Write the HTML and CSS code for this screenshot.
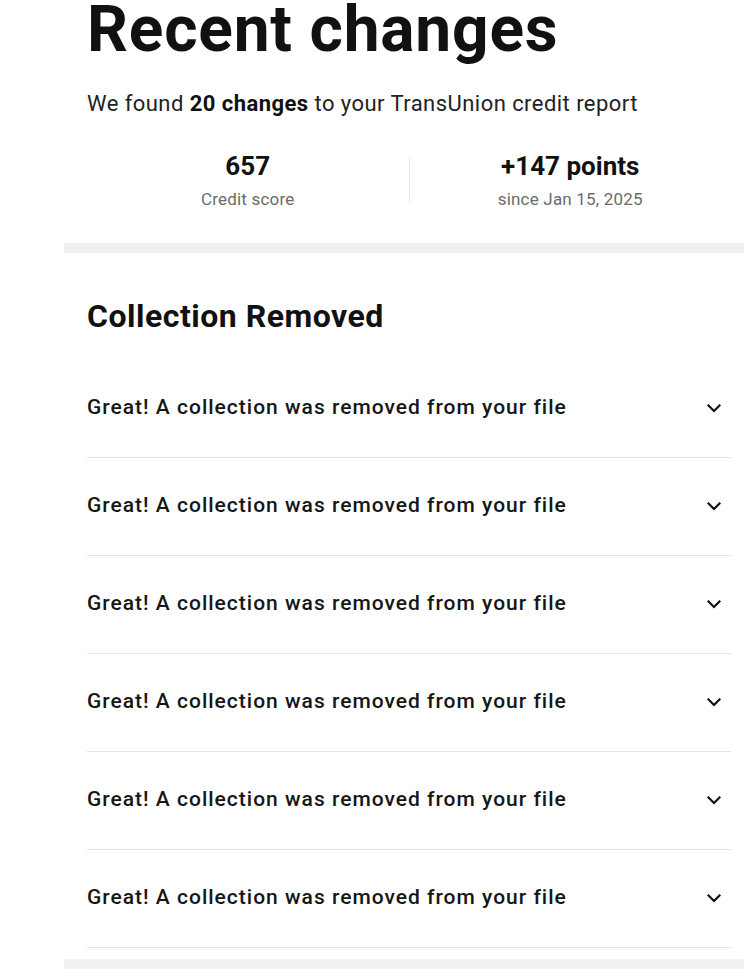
FILE: index.html
```html
<!DOCTYPE html>
<html>
<head>
  <meta charset="UTF-8">
  <link rel="stylesheet" href="styles.css">
</head>
<body>
  <div class="page">
    <div class="intro">
      <h1 class="title">Recent changes</h1>
      <p class="summary">We found <strong>20 changes</strong> to your TransUnion credit report</p>

      <div class="stats">
        <div class="stat">
          <div class="stat-value">657</div>
          <div class="stat-label">Credit score</div>
        </div>
        <div class="stat-divider"></div>
        <div class="stat">
          <div class="stat-value">+147 points</div>
          <div class="stat-label">since Jan 15, 2025</div>
        </div>
      </div>
    </div>

    <div class="band"></div>

    <div class="section">
      <h2 class="section-title">Collection Removed</h2>

      <div class="change-list">
        <div class="change-row">
          <span class="change-text">Great! A collection was removed from your file</span>
          <svg class="chevron" width="14" height="9" viewBox="0 0 14 9"><path d="M1.5 1.5 L7 7 L12.5 1.5" fill="none" stroke="#111" stroke-width="2.2" stroke-linecap="square"/></svg>
        </div>
        <div class="change-row">
          <span class="change-text">Great! A collection was removed from your file</span>
          <svg class="chevron" width="14" height="9" viewBox="0 0 14 9"><path d="M1.5 1.5 L7 7 L12.5 1.5" fill="none" stroke="#111" stroke-width="2.2" stroke-linecap="square"/></svg>
        </div>
        <div class="change-row">
          <span class="change-text">Great! A collection was removed from your file</span>
          <svg class="chevron" width="14" height="9" viewBox="0 0 14 9"><path d="M1.5 1.5 L7 7 L12.5 1.5" fill="none" stroke="#111" stroke-width="2.2" stroke-linecap="square"/></svg>
        </div>
        <div class="change-row">
          <span class="change-text">Great! A collection was removed from your file</span>
          <svg class="chevron" width="14" height="9" viewBox="0 0 14 9"><path d="M1.5 1.5 L7 7 L12.5 1.5" fill="none" stroke="#111" stroke-width="2.2" stroke-linecap="square"/></svg>
        </div>
        <div class="change-row">
          <span class="change-text">Great! A collection was removed from your file</span>
          <svg class="chevron" width="14" height="9" viewBox="0 0 14 9"><path d="M1.5 1.5 L7 7 L12.5 1.5" fill="none" stroke="#111" stroke-width="2.2" stroke-linecap="square"/></svg>
        </div>
        <div class="change-row">
          <span class="change-text">Great! A collection was removed from your file</span>
          <svg class="chevron" width="14" height="9" viewBox="0 0 14 9"><path d="M1.5 1.5 L7 7 L12.5 1.5" fill="none" stroke="#111" stroke-width="2.2" stroke-linecap="square"/></svg>
        </div>
      </div>
    </div>

    <div class="band band-bottom"></div>
  </div>
</body>
</html>
```

FILE: styles.css
```css
* {
  margin: 0;
  padding: 0;
  box-sizing: border-box;
}

body {
  font-family: Roboto, 'Liberation Sans', sans-serif;
  color: #111111;
  background: #ffffff;
}

.page {
  margin-left: 64px;
}

.intro {
  padding: 0 13px 0 23px;
}

.title {
  font-size: 64px;
  line-height: 60px;
  font-weight: 700;
  letter-spacing: 0.8px;
}

.summary {
  margin-top: 30px;
  font-size: 22px;
  line-height: 28px;
  letter-spacing: 0.45px;
  color: #222222;
}

.summary strong {
  font-weight: 700;
  color: #111111;
}

/* Score + change summary */
.stats {
  display: grid;
  grid-template-columns: 1fr 1px 1fr;
  margin-top: 32px;
  margin-bottom: 33px;
}

.stat {
  text-align: center;
}

.stat-value {
  font-size: 26px;
  line-height: 32px;
  font-weight: 700;
}

.stat-label {
  margin-top: 6px;
  font-size: 17px;
  line-height: 22px;
  letter-spacing: 0.2px;
  color: #6b6b6b;
}

.stat-divider {
  align-self: center;
  height: 44px;
  background: #e6e6e6;
}

.band {
  height: 10px;
  background: #eef0f2;
}

.band-bottom {
  margin-top: 11px;
}

.section {
  padding: 0 13px 0 23px;
}

.section-title {
  margin-top: 45px;
  font-size: 32px;
  line-height: 36px;
  font-weight: 700;
  letter-spacing: 0.5px;
}

.change-list {
  margin-top: 26px;
}

.change-row {
  display: flex;
  align-items: center;
  justify-content: space-between;
  height: 98px;
  padding-right: 10px;
  border-bottom: 1px solid #e4e4e4;
}

.change-text {
  margin-bottom: 4px;
  font-size: 21px;
  line-height: 26px;
  font-weight: 500;
  letter-spacing: 1px;
  color: #161616;
}

.chevron {
  display: block;
}
```
